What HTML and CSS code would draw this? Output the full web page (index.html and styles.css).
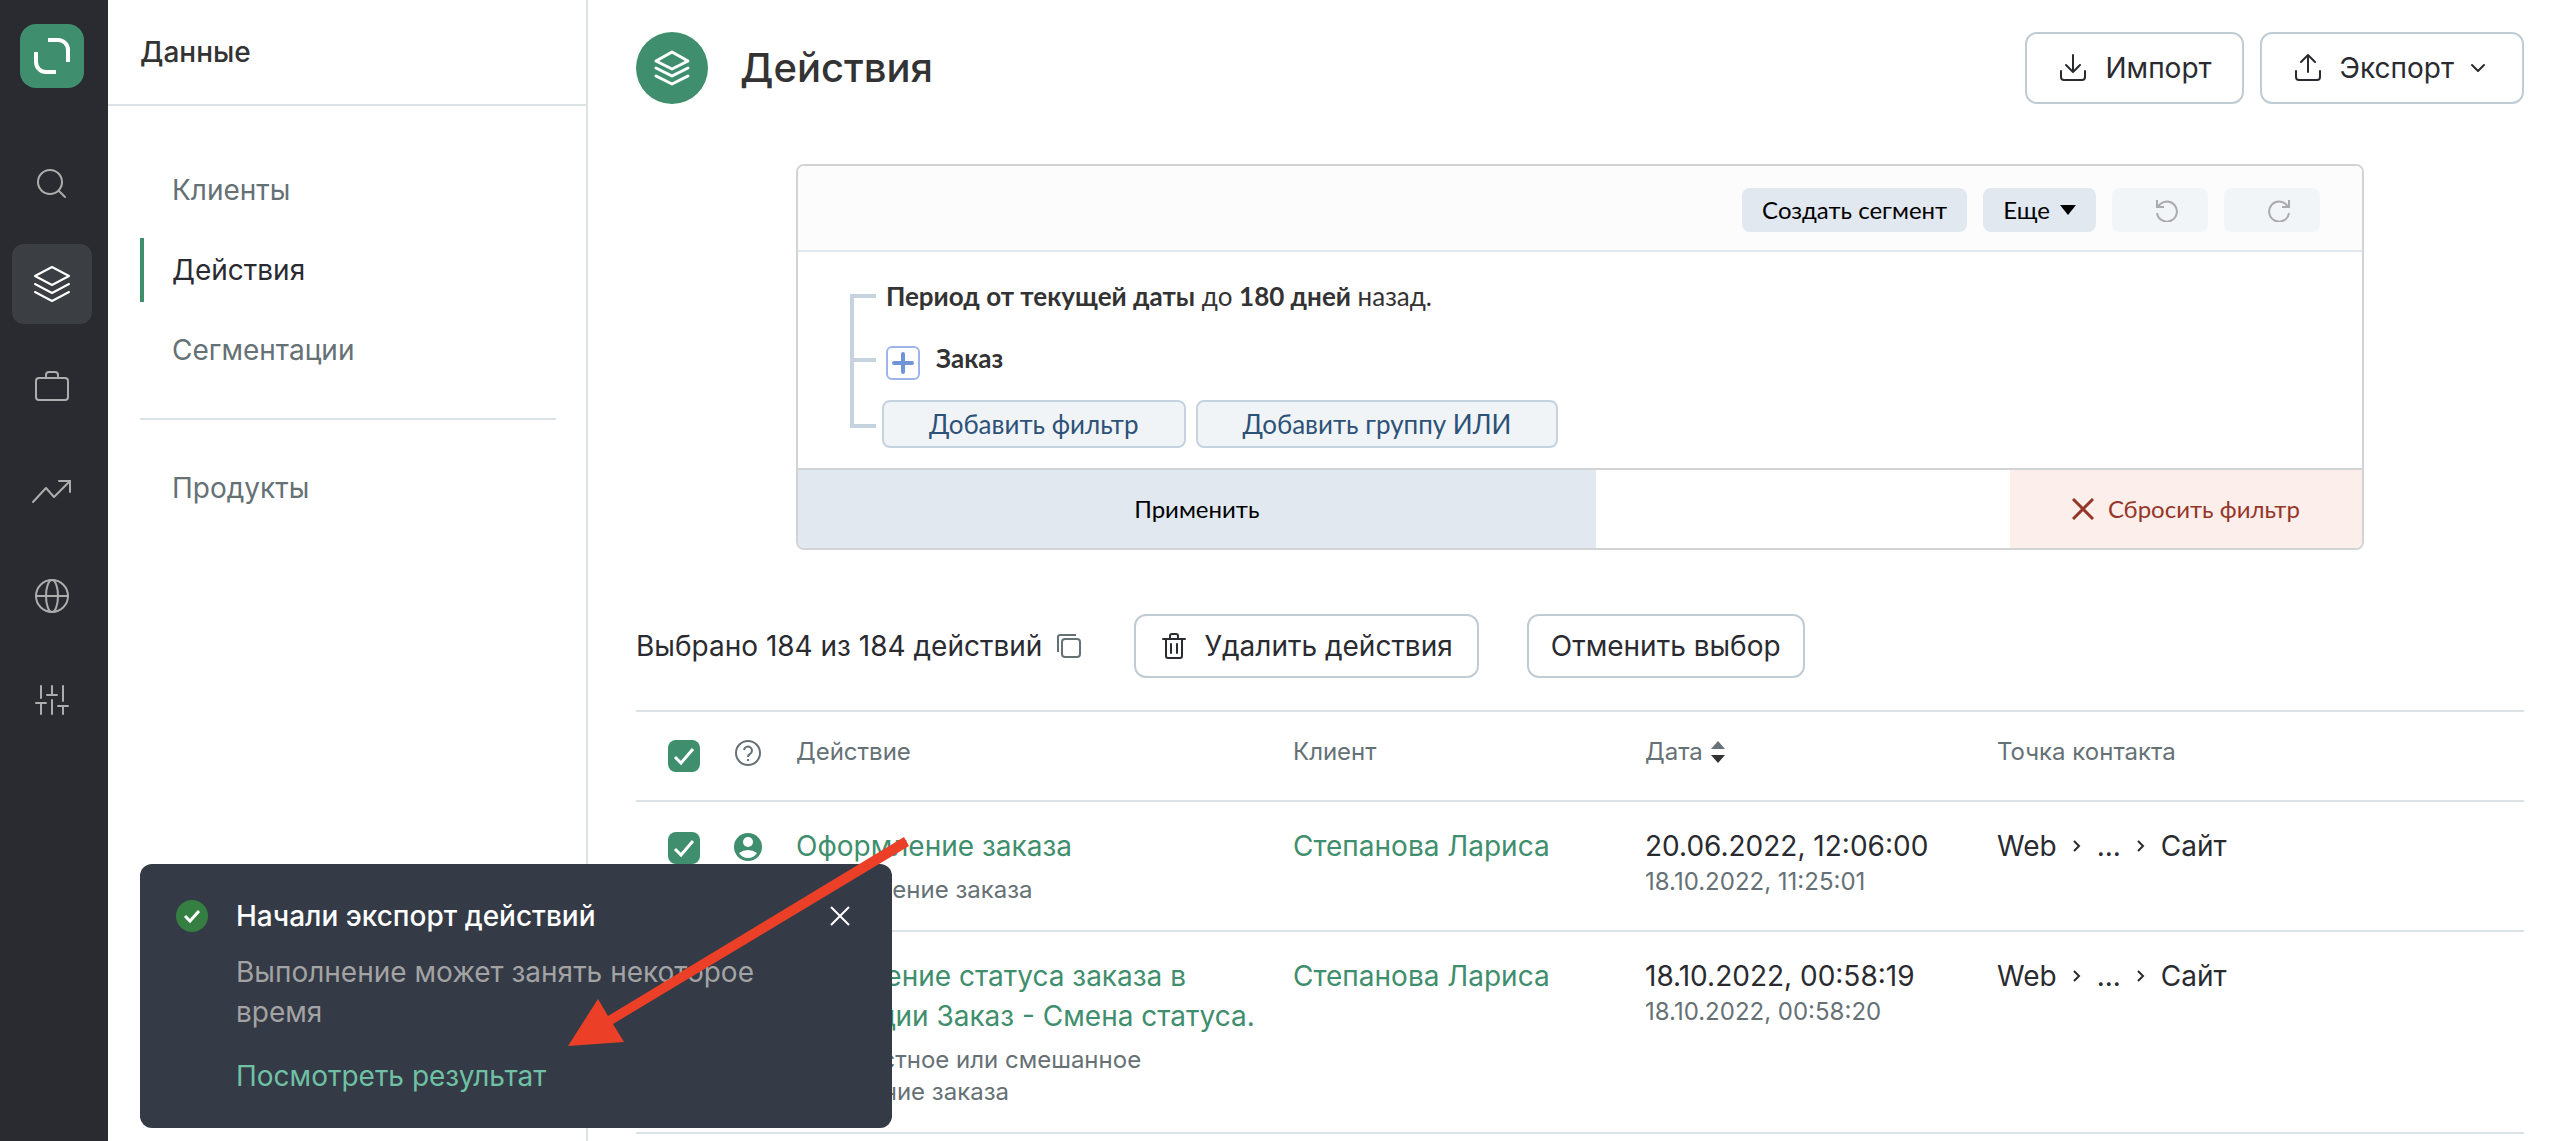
FILE: index.html
```html
<!DOCTYPE html>
<html lang="ru">
<head>
<meta charset="utf-8">
<title>Действия</title>
<link rel="stylesheet" href="styles.css">
</head>
<body>
<div class="app">
  <nav class="rail" aria-label="Разделы">
    <a class="logo" href="#" aria-label="Главная">
      <svg width="36" height="36" viewBox="0 0 36 36" fill="none" stroke="#fff" stroke-width="4"><path d="M14 2h10a10 10 0 0 1 10 10v12"/><path d="M2 14v10a10 10 0 0 0 10 10h10"/></svg>
    </a>
    <a class="rail-item" href="#" aria-label="Поиск">
      <svg width="40" height="40" viewBox="0 0 40 40"><circle cx="18" cy="22" r="12"/><path d="M27 31l6 6"/></svg>
    </a>
    <a class="rail-item active" href="#" aria-label="Данные">
      <svg width="40" height="40" viewBox="0 0 40 40"><path d="M20 3l17 9-17 9-17-9z"/><path d="M3 20l17 9 17-9"/><path d="M3 28l17 9 17-9"/></svg>
    </a>
    <a class="rail-item" href="#" aria-label="Кампании">
      <svg width="40" height="40" viewBox="0 0 40 40"><rect x="4" y="10" width="32" height="22" rx="3"/><path d="M14 10V7a3 3 0 0 1 3-3h6a3 3 0 0 1 3 3v3"/></svg>
    </a>
    <a class="rail-item" href="#" aria-label="Отчеты">
      <svg width="40" height="40" viewBox="0 0 40 40"><path d="M1 30l13-14 8 9 16-16"/><path d="M27 9h11v11"/></svg>
    </a>
    <a class="rail-item" href="#" aria-label="Интеграции">
      <svg width="40" height="40" viewBox="0 0 40 40"><circle cx="20" cy="20" r="16"/><ellipse cx="20" cy="20" rx="6" ry="16"/><path d="M4 20h32"/></svg>
    </a>
    <a class="rail-item" href="#" aria-label="Настройки">
      <svg width="40" height="40" viewBox="0 0 40 40"><path d="M9 6v12M4 23h10M9 23v11M20 6v9M15 15h10M20 20v14M31 6v15M26 26h10M31 26v8"/></svg>
    </a>
  </nav>

  <aside class="side">
    <h2 class="side-title">Данные</h2>
    <nav class="side-nav" aria-label="Данные">
      <a class="side-link" href="#">Клиенты</a>
      <a class="side-link current" href="#">Действия</a>
      <a class="side-link" href="#">Сегментации</a>
      <hr class="side-line">
      <a class="side-link" href="#">Продукты</a>
    </nav>
  </aside>

  <main class="main">
    <header class="page-head">
      <span class="page-icon">
        <svg width="40" height="40" viewBox="0 0 40 40" fill="none" stroke="#fff" stroke-width="3" stroke-linecap="round" stroke-linejoin="round"><path d="M20 4l16 9-16 8-16-8z"/><path d="M4 20l16 8 16-8"/><path d="M4 28l16 8 16-8"/></svg>
      </span>
      <h1 class="page-title">Действия</h1>
      <button class="btn btn-large" type="button">
        <svg class="ico" width="32" height="32" viewBox="0 0 32 32"><path d="M16 3v17M9 13l7 7 7-7M4 19v6a3 3 0 0 0 3 3h18a3 3 0 0 0 3-3v-6"/></svg>
        Импорт
      </button>
      <button class="btn btn-large" type="button">
        <svg class="ico" width="32" height="32" viewBox="0 0 32 32"><path d="M16 20V3M9 10l7-7 7 7M4 19v6a3 3 0 0 0 3 3h18a3 3 0 0 0 3-3v-6"/></svg>
        Экспорт
        <svg class="ico chev" width="16" height="16" viewBox="0 0 16 16"><path d="M2 5l6 6 6-6"/></svg>
      </button>
    </header>

    <section class="filter" aria-label="Фильтр">
      <div class="filter-head">
        <button class="chip" type="button">Создать сегмент</button>
        <button class="chip" type="button">Еще <svg width="16" height="10" viewBox="0 0 16 10"><path d="M0 0h16l-8 10z"/></svg></button>
        <button class="chip chip-off" type="button" disabled aria-label="Отменить">
          <svg width="26" height="24" viewBox="0 0 26 24"><path d="M3 2v7h7M4 9a10 10 0 1 1-1 6"/></svg>
        </button>
        <button class="chip chip-off" type="button" disabled aria-label="Повторить">
          <svg width="26" height="24" viewBox="0 0 26 24"><path d="M23 2v7h-7M22 9a10 10 0 1 0 1 6"/></svg>
        </button>
      </div>
      <div class="filter-body">
        <div class="tree" aria-hidden="true"><span></span><span></span></div>
        <div class="conditions">
          <p class="condition"><span><b>Период от текущей даты</b> до <b>180 дней</b> назад.</span></p>
          <p class="condition">
            <button class="plus" type="button" aria-label="Развернуть"><svg width="22" height="22" viewBox="0 0 22 22"><path d="M11 2v18M2 11h18"/></svg></button>
            <b>Заказ</b>
          </p>
          <div class="adders">
            <button class="add" type="button">Добавить фильтр</button>
            <button class="add" type="button">Добавить группу ИЛИ</button>
          </div>
        </div>
      </div>
      <div class="filter-foot">
        <button class="apply" type="button">Применить</button>
        <button class="reset" type="button"><svg width="22" height="22" viewBox="0 0 22 22"><path d="M1 1l20 20M21 1L1 21"/></svg>Сбросить фильтр</button>
      </div>
    </section>

    <div class="selection">
      <p class="selection-text">Выбрано 184 из 184 действий
        <svg width="26" height="26" viewBox="0 0 26 26"><rect x="6" y="6" width="18" height="18" rx="3"/><path d="M2 19V4a2 2 0 0 1 2-2h16"/></svg>
      </p>
      <button class="btn btn-delete" type="button">
        <svg class="ico" width="28" height="28" viewBox="0 0 28 28"><path d="M3 7h22M6 7v17a2 2 0 0 0 2 2h12a2 2 0 0 0 2-2V7M11 12v9M17 12v9M10 7V4a2 2 0 0 1 2-2h4a2 2 0 0 1 2 2v3"/></svg>
        Удалить действия
      </button>
      <button class="btn" type="button">Отменить выбор</button>
    </div>

    <table class="grid">
      <colgroup><col class="c-check"><col class="c-icon"><col class="c-action"><col class="c-client"><col class="c-date"><col></colgroup>
      <thead>
        <tr>
          <th><input class="check" type="checkbox" checked aria-label="Выбрать все"></th>
          <th><svg class="help" width="28" height="28" viewBox="0 0 28 28"><circle cx="14" cy="14" r="12"/><path d="M10 11a4 4 0 1 1 6 4q-2 1-2 3M14 20v2"/></svg></th>
          <th>Действие</th>
          <th>Клиент</th>
          <th><span class="sort">Дата <svg width="14" height="24" viewBox="0 0 14 24"><path fill="#66717a" d="M7 1l7 8H0z"/><path fill="#333" d="M7 23l7-8H0z"/></svg></span></th>
          <th>Точка контакта</th>
        </tr>
      </thead>
      <tbody>
        <tr>
          <td><input class="check" type="checkbox" checked aria-label="Выбрать действие"></td>
          <td><svg class="user" width="28" height="28" viewBox="0 0 28 28"><circle cx="14" cy="14" r="14" fill="#3f8e6d"/><circle cx="14" cy="9" r="5" fill="#fff"/><path fill="#fff" d="M5 20q9-6 18 0-3 5-9 5t-9-5z"/></svg></td>
          <td><a class="link" href="#">Оформление заказа</a><small class="note">Оформление заказа</small></td>
          <td><a class="link" href="#">Степанова Лариса</a></td>
          <td><span class="when">20.06.2022, 12:06:00</span><small class="stamp">18.10.2022, 11:25:01</small></td>
          <td><span class="path">Web <svg width="8" height="14" viewBox="0 0 8 14"><path d="M1 2l5 5-5 5"/></svg> ... <svg width="8" height="14" viewBox="0 0 8 14"><path d="M1 2l5 5-5 5"/></svg> Сайт</span></td>
        </tr>
        <tr>
          <td><input class="check" type="checkbox" checked aria-label="Выбрать действие"></td>
          <td><svg class="user" width="28" height="28" viewBox="0 0 28 28"><circle cx="14" cy="14" r="14" fill="#3f8e6d"/><circle cx="14" cy="9" r="5" fill="#fff"/><path fill="#fff" d="M5 20q9-6 18 0-3 5-9 5t-9-5z"/></svg></td>
          <td><a class="link" href="#">Изменение статуса заказа в<br>операции Заказ - Смена статуса.</a><small class="note">Неизвестное или смешанное<br>изменение заказа</small></td>
          <td><a class="link" href="#">Степанова Лариса</a></td>
          <td><span class="when">18.10.2022, 00:58:19</span><small class="stamp">18.10.2022, 00:58:20</small></td>
          <td><span class="path">Web <svg width="8" height="14" viewBox="0 0 8 14"><path d="M1 2l5 5-5 5"/></svg> ... <svg width="8" height="14" viewBox="0 0 8 14"><path d="M1 2l5 5-5 5"/></svg> Сайт</span></td>
        </tr>
      </tbody>
    </table>
  </main>
</div>

<div class="toast" role="status">
  <svg class="toast-ok" width="32" height="32" viewBox="0 0 32 32"><circle cx="16" cy="16" r="16" fill="#357f42"/><path fill="none" stroke="#fff" stroke-width="3" d="M9 16l5 5 9-10"/></svg>
  <div class="toast-body">
    <strong class="toast-title">Начали экспорт действий</strong>
    <p class="toast-text">Выполнение может занять некоторое время</p>
    <a class="toast-link" href="#">Посмотреть результат</a>
  </div>
  <button class="toast-close" type="button" aria-label="Закрыть"><svg width="20" height="20" viewBox="0 0 20 20"><path d="M1 1l18 18M19 1L1 19"/></svg></button>
</div>
<svg class="pointer" width="344" height="212" viewBox="0 0 344 212" aria-hidden="true"><path fill="#eb4027" d="M336 2l5 9L45 189l11 18-56 4 30-47 10 17z"/></svg>
</body>
</html>
```

FILE: styles.css
```css
* { box-sizing: border-box; }
body {
  margin: 0;
  background: #fff;
  color: #2a2b30;
  font: 28px/40px Inter, "Liberation Sans", sans-serif;
}
h1, h2, p { margin: 0; }
a { color: inherit; text-decoration: none; }
button { font: inherit; color: inherit; margin: 0; padding: 0; border: 0; background: none; cursor: pointer; }
svg { flex: none; }

.app { display: flex; min-height: 100vh; }

/* Icon rail */
.rail {
  flex: none;
  width: 108px;
  padding: 24px 16px 24px 12px;
  display: flex;
  flex-direction: column;
  gap: 24px;
  background: #2a2b30;
}
.logo {
  width: 64px;
  height: 64px;
  margin: 0 8px 28px;
  border-radius: 16px;
  background: #3f8e6d;
  display: grid;
  place-items: center;
}
.rail-item {
  width: 80px;
  height: 80px;
  border-radius: 12px;
  display: grid;
  place-items: center;
}
.rail-item svg { fill: none; stroke: #adadad; stroke-width: 2; stroke-linejoin: round; stroke-linecap: round; }
.rail-item.active { background: #3b3e43; }
.rail-item.active svg { stroke: #fff; }

/* Section menu */
.side { flex: none; width: 480px; border-right: 2px solid #dce3e7; }
.side-title { padding: 32px; border-bottom: 2px solid #dce3e7; font-size: 28px; font-weight: 500; color: #333; }
.side-nav { padding: 44px 30px 0 32px; display: flex; flex-direction: column; }
.side-link { height: 64px; margin: 8px 0; padding-left: 28px; border-left: 4px solid transparent; line-height: 64px; color: #667175; }
.side-link.current { color: #2a2b30; border-color: #3f8e6d; }
.side-line { width: 100%; margin: 28px 0; border: 0; border-top: 2px solid #dce3e7; }

/* Page */
.main { flex: 1; min-width: 0; padding: 32px 38px 0 48px; }
.page-head { display: flex; align-items: center; gap: 16px; }
.page-icon { width: 72px; height: 72px; border-radius: 50%; background: #3f8e6d; display: grid; place-items: center; }
.page-title { flex: 1; margin-left: 16px; font-size: 40px; line-height: 48px; font-weight: 500; color: #333; }
.btn {
  height: 64px;
  padding: 0 22px;
  display: flex;
  align-items: center;
  gap: 16px;
  border: 2px solid #c0ccd4;
  border-radius: 12px;
  background: #fff;
}
.btn-large { height: 72px; padding: 0 30px; }
.ico { fill: none; stroke: #2a2b30; stroke-width: 2; stroke-linecap: round; stroke-linejoin: round; }
.chev { margin-right: 6px; }

/* Filter builder */
.filter {
  margin: 60px 160px 64px;
  border: 2px solid #d2d3d4;
  border-radius: 8px;
  overflow: hidden;
  font-family: Lato, "Open Sans", sans-serif;
  color: #333;
}
.filter-head { padding: 22px 42px 18px; display: flex; justify-content: flex-end; gap: 16px; background: #fcfcfc; border-bottom: 2px solid #e1e8ef; }
.chip { height: 44px; padding: 0 20px; display: flex; align-items: center; gap: 10px; border-radius: 8px; background: #e1e8ef; color: #000; font-size: 24px; }
.chip-off { width: 96px; padding-left: 42px; background: #f1f5f7; }
.chip-off svg { fill: none; stroke: #a9abad; stroke-width: 2; }
.filter-body { padding: 24px 52px 20px; display: flex; gap: 6px; }
.tree { width: 26px; margin: 18px 0 20px; display: flex; flex-direction: column; border: 4px solid #c5d3e0; border-right: 0; }
.tree span { height: 60px; }
.tree span + span { border-top: 4px solid #c5d3e0; }
.conditions { flex: 1; }
.condition { height: 62px; padding-left: 4px; display: flex; align-items: flex-start; gap: 8px; font-size: 26px; }
.plus { width: 34px; height: 34px; margin: 8px 8px 0 0; border: 2px solid #9db5e8; border-radius: 6px; display: grid; place-items: center; }
.plus svg { stroke: #7094d8; stroke-width: 4; stroke-linecap: round; }
.adders { display: flex; gap: 10px; }
.add { height: 48px; padding: 0 45px; border: 2px solid #c5d3e0; border-radius: 8px; background: #f1f4f7; color: #2d5278; font-size: 26px; }
.filter-foot { display: flex; justify-content: space-between; border-top: 2px solid #d2d3d4; }
.apply { width: 51%; height: 78px; background: #e1e8ef; color: #000; font-size: 24px; }
.reset { width: 352px; height: 78px; display: flex; align-items: center; justify-content: center; gap: 14px; background: #fceeeb; color: #963629; font-size: 24px; }
.reset svg { stroke: #963629; stroke-width: 3; }

/* Selection bar */
.selection { display: flex; align-items: center; gap: 48px; margin-bottom: 32px; }
.selection-text { display: flex; align-items: center; gap: 14px; padding-right: 4px; }
.selection-text svg { fill: none; stroke: #667175; stroke-width: 2; }
.btn-delete { padding: 0 24px; }

/* Table */
.grid { width: 100%; table-layout: fixed; border-collapse: separate; border-spacing: 0; border-top: 2px solid #dce3e7; }
.c-check { width: 98px; }
.c-icon { width: 62px; }
.c-action { width: 497px; }
.c-client { width: 352px; }
.c-date { width: 352px; }
th, td { padding: 24px 0; border-bottom: 2px solid #dce3e7; text-align: left; vertical-align: top; }
th { height: 90px; padding: 20px 0 0; font-size: 24px; font-weight: 400; color: #667175; }
.check {
  appearance: none;
  display: block;
  width: 32px;
  height: 32px;
  margin: 6px 0 0 32px;
  border-radius: 8px;
  background: #3f8e6d url("data:image/svg+xml,%3Csvg xmlns='http://www.w3.org/2000/svg' width='32' height='32' fill='none' stroke='white' stroke-width='3'%3E%3Cpath d='M7 17l6 6L25 9'/%3E%3C/svg%3E");
}
th .check { margin-top: 8px; }
.help, .user { display: block; margin-top: 7px; }
.help { fill: none; stroke: #667175; stroke-width: 2; }
.sort { display: flex; align-items: center; gap: 8px; }
.link { display: block; color: #3f8e6d; }
.note, .stamp { display: block; font-size: 24px; line-height: 32px; color: #667175; }
.note { margin-top: 8px; }
.when { display: block; }
.path { display: flex; align-items: center; gap: 16px; }
.path svg { fill: none; stroke: #2a2b30; stroke-width: 2; }

/* Notification */
.toast {
  position: fixed;
  left: 140px;
  bottom: 13px;
  width: 752px;
  padding: 32px 40px 32px 36px;
  display: flex;
  align-items: flex-start;
  gap: 28px;
  border-radius: 12px;
  background: #343a46;
  color: #fff;
}
.toast-ok { margin-top: 4px; }
.toast-body { flex: 1; }
.toast-title { display: block; font-weight: 500; }
.toast-text { margin: 16px 0 24px; color: #a3a3a3; }
.toast-link { display: block; color: #6fc1a5; }
.toast-close { width: 24px; height: 40px; display: grid; place-items: center; }
.toast-close svg { stroke: #fff; stroke-width: 2; }
.pointer { position: fixed; left: 568px; bottom: 94px; }
```
